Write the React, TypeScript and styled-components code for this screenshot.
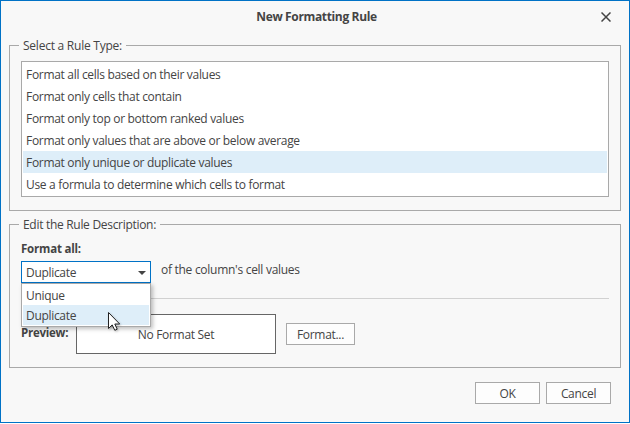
import React from 'react';
import styled, { createGlobalStyle } from 'styled-components';

const line = '#a9a9a9';
const accent = '#0072c6';
const highlight = '#deeef9';

const GlobalStyle = createGlobalStyle`
  * { box-sizing: border-box; }
  body {
    margin: 0;
    background: #ffffff;
    color: #444444;
    font: 12px/16px "Open Sans", "Noto Sans", sans-serif;
    letter-spacing: -0.31px;
    white-space: nowrap;
    overflow: hidden;
  }
`;

const Dialog = styled.div`
  width: 630px;
  height: 423px;
  display: flex;
  flex-direction: column;
  padding: 0 8px;
  border: 1px solid ${accent};
  background: #f8f8f8;
`;

const TitleBar = styled.header`
  display: grid;
  grid-template-columns: 28px 1fr 28px;
  align-items: center;
  height: 32px;
  margin-bottom: 12px;
`;

const Title = styled.h1`
  grid-column: 2;
  margin: 0;
  padding-left: 3px;
  font: inherit;
  font-weight: 700;
  letter-spacing: -0.35px;
  text-align: center;
`;

const CloseButton = styled.button`
  display: flex;
  align-items: center;
  justify-content: flex-end;
  height: 28px;
  padding: 0 10px 0 0;
  border: 0;
  background: none;
  color: #444444;
`;

const Group = styled.section<{ $height: number }>`
  width: 612px;
  height: ${(p) => p.$height}px;
  padding: 0 11px;
  border: 1px solid ${line};
  border-top: 0;
  & + & { margin-top: 13px; }
`;

const Legend = styled.div<{ $spacing: number }>`
  display: flex;
  height: 16px;
  margin: 0 -11px;
  letter-spacing: ${(p) => p.$spacing}px;
  &::before, &::after {
    content: "";
    height: 1px;
    background: ${line};
  }
  &::before { width: 9px; margin-right: 4px; }
  &::after { flex: 1; margin-left: 4px; }
  span { margin-top: -7px; }
`;

const RuleList = styled.ul`
  height: 136px;
  margin: 0;
  padding: 1px;
  padding-bottom: 0;
  border: 1px solid ${line};
  background: #ffffff;
  list-style: none;
`;

const RuleItem = styled.li<{ $selected?: boolean }>`
  height: 22px;
  padding: 0 3px;
  line-height: 24px;
  background: ${(p) => (p.$selected ? highlight : 'transparent')};
`;

const FieldLabel = styled.div`
  height: 21px;
  padding-top: 1px;
  font-size: 11.5px;
  font-weight: 700;
  letter-spacing: -0.2px;
`;

const ConditionRow = styled.div`
  display: flex;
  gap: 10px;
  height: 38px;
  border-bottom: 1px solid #d1d1d1;
`;

const Select = styled.div`
  position: relative;
  width: 130px;
  height: 22px;
`;

const SelectBox = styled.div`
  display: flex;
  align-items: center;
  justify-content: space-between;
  height: 22px;
  padding: 1px 4px 0;
  border: 1px solid ${accent};
  background: #ffffff;
`;

const Menu = styled.ul`
  position: absolute;
  z-index: 1;
  top: 22px;
  left: 0;
  width: 130px;
  height: 44px;
  margin: 0;
  padding: 1px;
  border: 1px solid ${line};
  background: #ffffff;
  box-shadow: 2px 2px 4px rgba(0, 0, 0, 0.25);
  list-style: none;
`;

const MenuItem = styled.li<{ $active?: boolean }>`
  height: 20px;
  padding: 0 3px;
  line-height: 22px;
  background: ${(p) => (p.$active ? highlight : 'transparent')};
`;

const ConditionText = styled.span`
  padding-top: 1px;
  letter-spacing: -0.28px;
`;

const PreviewRow = styled.div`
  display: flex;
  align-items: center;
  height: 40px;
  margin-top: 15px;
`;

const PreviewLabel = styled.div`
  width: 55px;
  padding-bottom: 2px;
  font-size: 11.5px;
  font-weight: 700;
  letter-spacing: -0.25px;
`;

const PreviewBox = styled.div`
  display: flex;
  align-items: center;
  justify-content: center;
  width: 200px;
  height: 40px;
  margin-right: 10px;
  padding-top: 2px;
  border: 1px solid #666666;
  background: #ffffff;
`;

const Button = styled.button<{ $width: number }>`
  width: ${(p) => p.$width}px;
  height: 22px;
  padding: 1px 0 0;
  border: 1px solid ${line};
  background: #fdfdfd;
  color: inherit;
  font: inherit;
  letter-spacing: inherit;
`;

const Footer = styled.footer`
  display: flex;
  justify-content: flex-end;
  gap: 6px;
  padding: 14px 10px 0 0;
`;

const Pointer = styled.svg`
  position: absolute;
  z-index: 2;
  top: 51px;
  left: 87px;
  filter: drop-shadow(1px 1px 1px rgba(0, 0, 0, 0.25));
`;

const rules = [
  'Format all cells based on their values',
  'Format only cells that contain',
  'Format only top or bottom ranked values',
  'Format only values that are above or below average',
  'Format only unique or duplicate values',
  'Use a formula to determine which cells to format',
];

export default function App() {
  return (
    <>
      <GlobalStyle />
      <Dialog>
        <TitleBar>
          <Title>New Formatting Rule</Title>
          <CloseButton aria-label="Close">
            <svg width="10" height="10" viewBox="0 0 10 10">
              <path d="M0.5 0.5L9.5 9.5M9.5 0.5L0.5 9.5" stroke="currentColor" strokeWidth="1.5" />
            </svg>
          </CloseButton>
        </TitleBar>

        <Group $height={166}>
          <Legend $spacing={-0.24}><span>Select a Rule Type:</span></Legend>
          <RuleList>
            {rules.map((rule, i) => (
              <RuleItem key={rule} $selected={i === 4}>{rule}</RuleItem>
            ))}
          </RuleList>
        </Group>

        <Group $height={144}>
          <Legend $spacing={-0.3}><span>Edit the Rule Description:</span></Legend>
          <FieldLabel>Format all:</FieldLabel>
          <ConditionRow>
            <Select>
              <SelectBox>
                Duplicate
                <svg width="8" height="4" viewBox="0 0 8 4">
                  <path d="M0 0H8L4 4Z" fill="#444444" />
                </svg>
              </SelectBox>
              <Menu>
                <MenuItem>Unique</MenuItem>
                <MenuItem $active>Duplicate</MenuItem>
              </Menu>
              <Pointer width="16" height="22" viewBox="0 0 16 22">
                <path
                  d="M0.5 0.5V16.5L4.2 12.9L6.8 18.3L9.2 17.2L6.8 12H11.7Z"
                  fill="#ffffff"
                  stroke="#222222"
                />
              </Pointer>
            </Select>
            <ConditionText>of the column's cell values</ConditionText>
          </ConditionRow>
          <PreviewRow>
            <PreviewLabel>Preview:</PreviewLabel>
            <PreviewBox>No Format Set</PreviewBox>
            <Button $width={69}>Format...</Button>
          </PreviewRow>
        </Group>

        <Footer>
          <Button $width={65}>OK</Button>
          <Button $width={65}>Cancel</Button>
        </Footer>
      </Dialog>
    </>
  );
}
